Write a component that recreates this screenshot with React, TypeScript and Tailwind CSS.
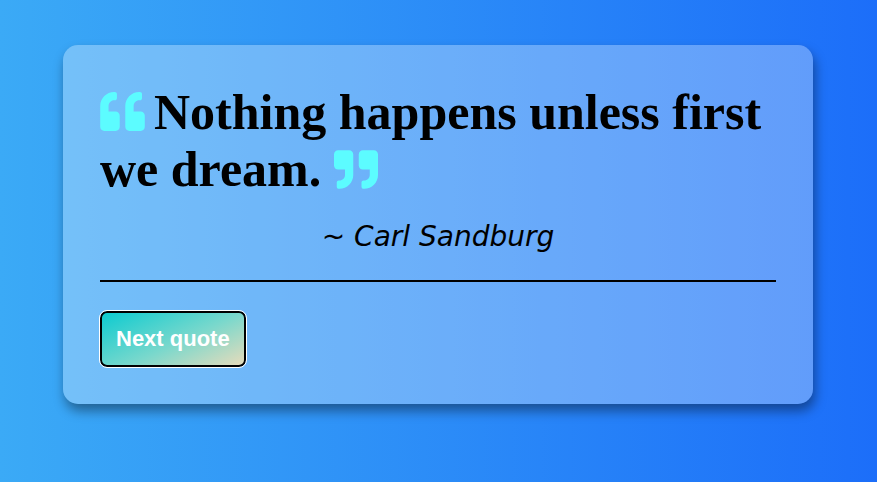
import React from "react";

function QuoteLeft({ className }: { className?: string }) {
  return (
    <svg viewBox="0 32 512 448" className={className} fill="currentColor" aria-hidden="true">
      <path d="M464 256h-80v-64c0-35.3 28.7-64 64-64h8c13.3 0 24-10.7 24-24V56c0-13.3-10.7-24-24-24h-8c-88.4 0-160 71.6-160 160v240c0 26.5 21.5 48 48 48h128c26.5 0 48-21.5 48-48V304c0-26.5-21.5-48-48-48zm-288 0H96v-64c0-35.3 28.7-64 64-64h8c13.3 0 24-10.7 24-24V56c0-13.3-10.7-24-24-24h-8C71.6 32 0 103.6 0 192v240c0 26.5 21.5 48 48 48h128c26.5 0 48-21.5 48-48V304c0-26.5-21.5-48-48-48z" />
    </svg>
  );
}

function QuoteRight({ className }: { className?: string }) {
  return (
    <svg viewBox="0 32 512 448" className={className} fill="currentColor" aria-hidden="true">
      <path d="M464 32H336c-26.5 0-48 21.5-48 48v128c0 26.5 21.5 48 48 48h80v64c0 35.3-28.7 64-64 64h-8c-13.3 0-24 10.7-24 24v48c0 13.3 10.7 24 24 24h8c88.4 0 160-71.6 160-160V80c0-26.5-21.5-48-48-48zm-288 0H48C21.5 32 0 53.5 0 80v128c0 26.5 21.5 48 48 48h80v64c0 35.3-28.7 64-64 64h-8c-13.3 0-24 10.7-24 24v48c0 13.3 10.7 24 24 24h8c88.4 0 160-71.6 160-160V80c0-26.5-21.5-48-48-48z" />
    </svg>
  );
}

export default function App() {
  return (
    <div className="w-full h-[482px] bg-[linear-gradient(90deg,#3baaf6_0%,#1c6ef9_100%)] pt-[45px] pl-[63px] overflow-hidden">
      <div className="w-[750px] rounded-[15px] bg-white/30 shadow-[2px_7px_12px_rgba(0,0,0,0.4)] px-[37px] pt-[39px] pb-[37px]">
        <h1 className="font-['Liberation_Serif',serif] font-bold text-[50px] leading-[57px] text-black m-0">
          <QuoteLeft className="inline-block align-baseline w-[45px] h-[39px] mr-[9px] text-[#5cfcff] relative top-[2px]" />
          Nothing happens unless first we dream.{" "}
          <QuoteRight className="inline-block align-baseline w-[44px] h-[39px] text-[#5cfcff] relative top-[3px]" />
        </h1>
        <p className="mt-[21px] text-center font-['Comic_Sans_MS','DejaVu_Sans',sans-serif] italic text-[28px] leading-[36px] text-black">
          ~ Carl Sandburg
        </p>
        <hr className="mt-[25px] border-0 h-[2px] bg-black" />
        <button className="mt-[29px] rounded-[7px] border-2 border-black outline outline-1 outline-white bg-[linear-gradient(155deg,#0ccbd0_0%,#7ad8cc_55%,#e6dbbb_100%)] px-[14px] py-[13px] font-['Liberation_Sans',Arial,sans-serif] font-bold text-[22px] leading-[26px] text-white">
          Next quote
        </button>
      </div>
    </div>
  );
}
